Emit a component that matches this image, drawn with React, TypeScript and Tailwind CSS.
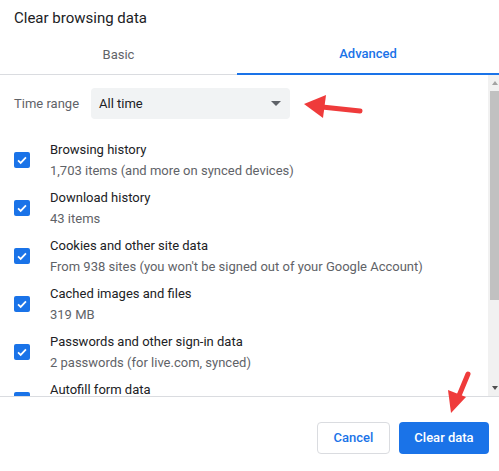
import React from 'react';

const items = [
  { title: 'Browsing history', sub: '1,703 items (and more on synced devices)' },
  { title: 'Download history', sub: '43 items' },
  { title: 'Cookies and other site data', sub: "From 938 sites (you won't be signed out of your Google Account)" },
  { title: 'Cached images and files', sub: '319 MB' },
  { title: 'Passwords and other sign-in data', sub: '2 passwords (for live.com, synced)' },
  { title: 'Autofill form data', sub: '' },
];

function Check() {
  return (
    <div className="w-4 h-4 rounded-[2px] bg-[#1a73e8] flex items-center justify-center shrink-0">
      <svg viewBox="0 0 16 16" className="w-3.5 h-3.5">
        <path d="M3.5 8.3l3 3 6-6.3" fill="none" stroke="white" strokeWidth="2" />
      </svg>
    </div>
  );
}

export default function App() {
  return (
    <div
      className="relative w-[499px] h-[471px] bg-white flex flex-col overflow-hidden text-[#202124]"
      style={{ fontFamily: 'Roboto, "Liberation Sans", sans-serif' }}
    >
      <div className="h-[35px] px-[14px] pt-[8px] text-[15px] leading-[20px]">Clear browsing data</div>

      {/* Tabs */}
      <div className="grid grid-cols-[237px_1fr] h-[40px] border-b border-[#dadce0]">
        <div className="flex items-center justify-center text-[13px] text-[#5f6368]">Basic</div>
        <div className="flex items-center justify-center text-[13px] font-medium text-[#1a73e8] border-b-2 border-[#1a73e8] -mb-px">
          Advanced
        </div>
      </div>

      {/* Scroll area */}
      <div className="flex h-[322px] border-b border-[#dadce0]">
        <div className="flex-1 overflow-hidden pl-[14px]">
          <div className="flex items-center mt-[13px] h-[31px]">
            <span className="text-[13px] text-[#5f6368] w-[77px]">Time range</span>
            <div className="w-[199px] h-[31px] bg-[#f1f3f4] rounded-[4px] flex items-center justify-between pl-[8px] pr-[9px] text-[13px]">
              <span>All time</span>
              <svg viewBox="0 0 10 5" className="w-[10px] h-[5px]">
                <path d="M0 0h10L5 5z" fill="#5f6368" />
              </svg>
            </div>
          </div>
          <div className="mt-[17px]">
            {items.map((it) => (
              <div key={it.title} className="h-[48px] flex items-center">
                <Check />
                <div className="ml-[20px] text-[13px] leading-[21px]">
                  <div>{it.title}</div>
                  {it.sub ? <div className="text-[#5f6368]">{it.sub}</div> : <div className="h-[21px]" />}
                </div>
              </div>
            ))}
          </div>
        </div>
        {/* Scrollbar */}
        <div className="w-[11px] bg-[#f1f1f1] flex flex-col items-end">
          <div className="h-[16px] w-[9px] flex items-center justify-center">
            <svg viewBox="0 0 6 4" className="w-[6px] h-[4px]">
              <path d="M0 4h6L3 0z" fill="#a3a3a3" />
            </svg>
          </div>
          <div className="w-[9px] h-[209px] bg-[#c1c1c1]" />
          <div className="flex-1" />
          <div className="h-[16px] w-[9px] flex items-center justify-center">
            <svg viewBox="0 0 6 4" className="w-[6px] h-[4px]">
              <path d="M0 0h6L3 4z" fill="#505050" />
            </svg>
          </div>
        </div>
      </div>

      {/* Footer */}
      <div className="flex-1 flex items-start justify-end gap-[9px] pr-[10px] pt-[25px]">
        <button className="w-[73px] h-[32px] rounded-[4px] border border-[#dadce0] bg-white text-[13px] font-medium text-[#1a73e8]">
          Cancel
        </button>
        <button className="w-[90px] h-[32px] rounded-[4px] bg-[#1a73e8] text-[13px] font-medium text-white">
          Clear data
        </button>
      </div>

      {/* Annotation arrows */}
      <svg className="absolute left-0 top-0 pointer-events-none" width="499" height="471">
        <path d="M360 111 L322 107" stroke="#ef3b3b" strokeWidth="5" strokeLinecap="round" fill="none" />
        <path d="M304 104 L326 95 L323 118 Z" fill="#ef3b3b" />
        <path d="M468 374 L458 398" stroke="#ef3b3b" strokeWidth="5" strokeLinecap="round" fill="none" />
        <path d="M451 413 L448 390 L466 397 Z" fill="#ef3b3b" />
      </svg>
    </div>
  );
}
